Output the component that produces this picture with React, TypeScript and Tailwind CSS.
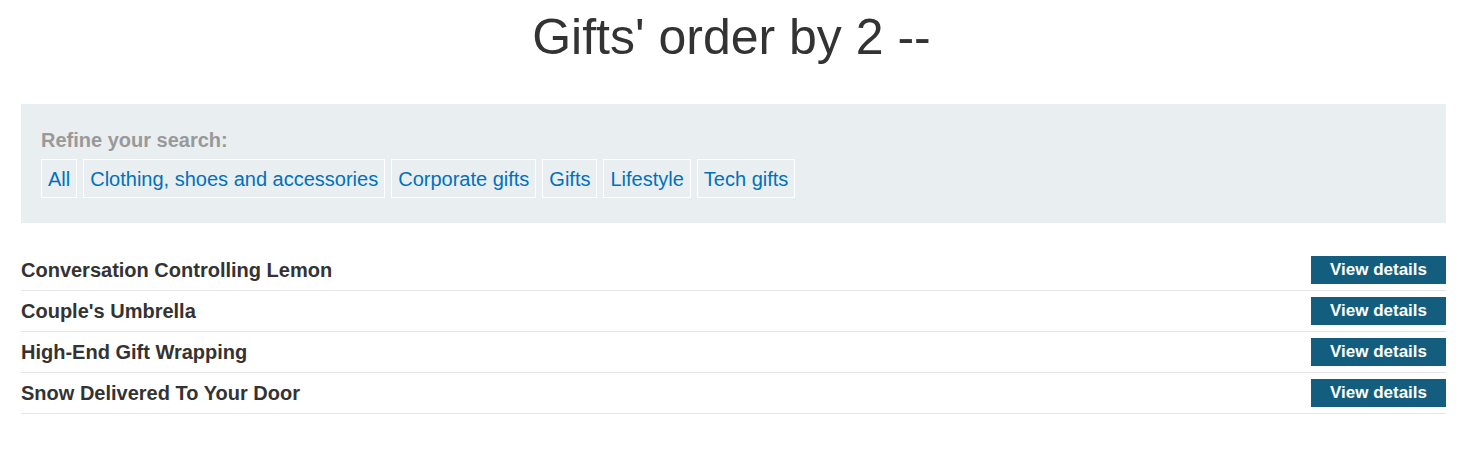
const categories = ['All', 'Clothing, shoes and accessories', 'Corporate gifts', 'Gifts', 'Lifestyle', 'Tech gifts']

const products = [
  'Conversation Controlling Lemon',
  "Couple's Umbrella",
  'High-End Gift Wrapping',
  'Snow Delivered To Your Door',
]

export default function App() {
  return (
    <div className="min-h-screen bg-white px-[21px] text-[#333333]" style={{ fontFamily: '"Liberation Sans", Arial, sans-serif' }}>
      <h1 className="pt-[9px] text-center text-[50px] leading-[57px] font-normal text-[#333333]">Gifts' order by 2 --</h1>

      <section className="mt-[38px] mr-[-4px] bg-[#e9eef1] px-5 pt-[24px] pb-[25px]">
        <p className="text-[20px] leading-[24px] font-bold text-[#999999]">Refine your search:</p>
        <div className="mt-[7px] flex flex-wrap gap-[6px]">
          {categories.map((c) => (
            <a
              key={c}
              href="#"
              className="border border-white px-[6px] pt-[8px] pb-[6px] text-[20px] leading-[23px] text-[#0071bc]"
            >
              {c}
            </a>
          ))}
        </div>
      </section>

      <ul className="mt-[27px] mr-[-4px]">
        {products.map((p) => (
          <li key={p} className="flex h-[41px] items-center justify-between border-b border-[#e6e6e6]">
            <span className="text-[20px] font-bold text-[#333333]">{p}</span>
            <button className="h-[28px] w-[135px] bg-[#135e7f] text-[17px] leading-[28px] font-bold text-white">
              View details
            </button>
          </li>
        ))}
      </ul>
    </div>
  )
}
